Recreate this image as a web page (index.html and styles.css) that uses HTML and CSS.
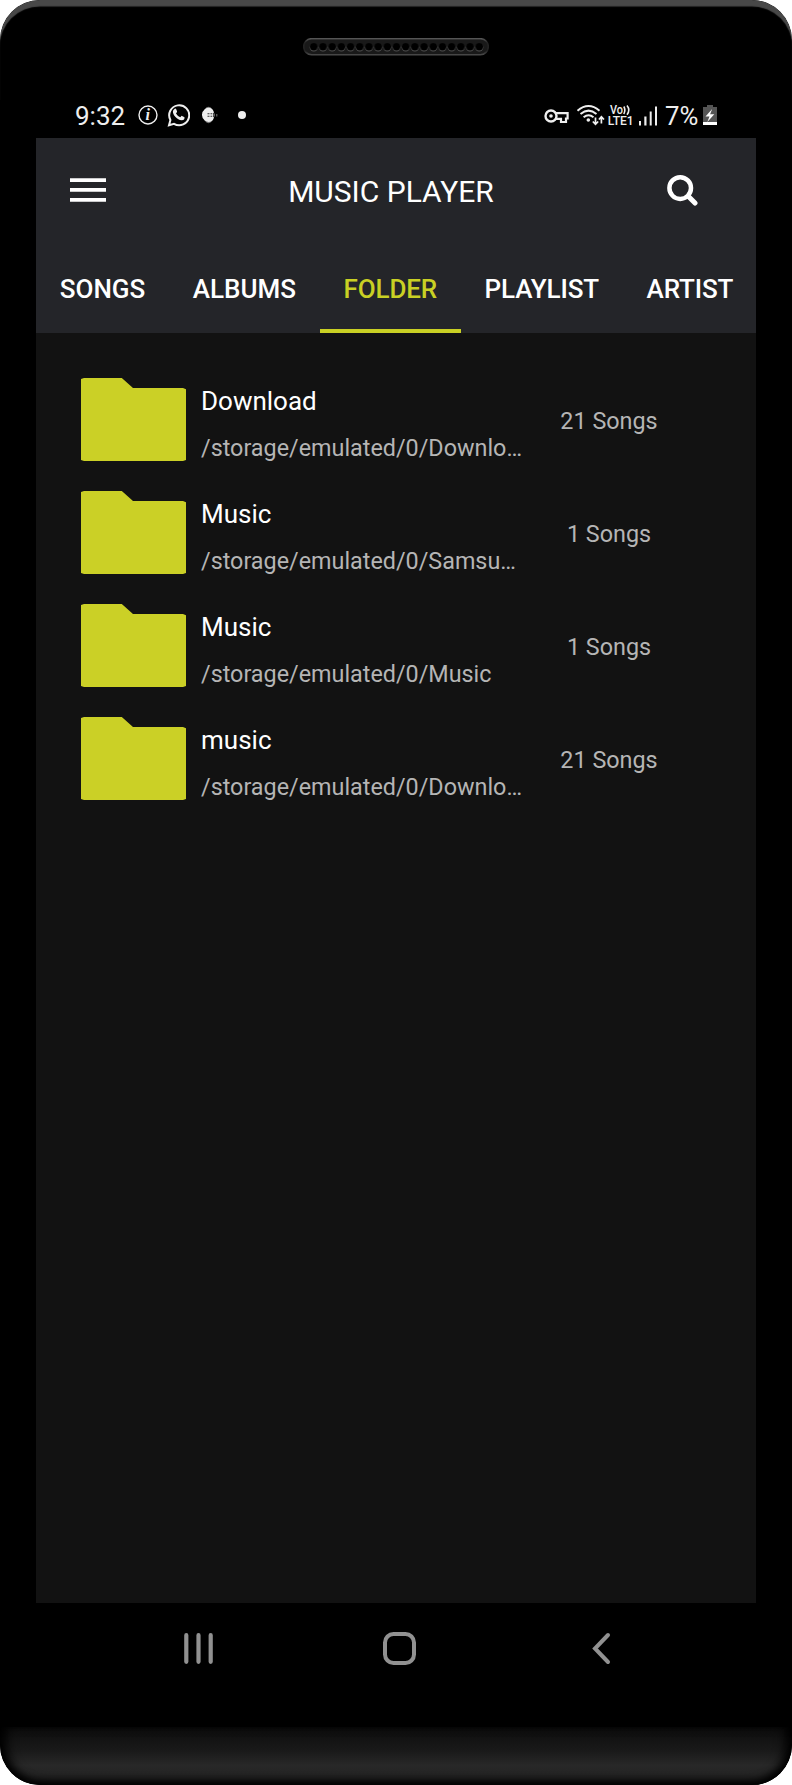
FILE: index.html
```html
<!DOCTYPE html>
<html lang="en">
<head>
<meta charset="utf-8">
<title>Music Player</title>
<link rel="stylesheet" href="styles.css">
</head>
<body>
<div class="phone">
  <div class="bezel-top">
    <svg class="speaker" width="186" height="18" viewBox="0 0 186 18">
      <defs>
        <linearGradient id="rim" x1="0" y1="0" x2="0" y2="1"><stop offset="0" stop-color="#555"/><stop offset=".25" stop-color="#222"/><stop offset=".75" stop-color="#222"/><stop offset="1" stop-color="#484848"/></linearGradient>
        <pattern id="holes" x="6.2" y="0" width="9.19" height="18" patternUnits="userSpaceOnUse"><circle cx="4.6" cy="9.5" r="4" fill="#505050"/><circle cx="4.6" cy="8.7" r="3.7" fill="#000"/></pattern>
      </defs>
      <rect x=".7" y=".7" width="184.6" height="16" rx="8" fill="#191919" stroke="url(#rim)" stroke-width="1.6"/>
      <rect x="6.2" y="0" width="174.6" height="18" fill="url(#holes)"/>
    </svg>
  </div>

  <div class="status">
    <div class="status-left">
      <span class="clock">9:32</span>
      <svg class="ic-info" width="20" height="20" viewBox="0 0 20 20"><circle cx="10" cy="10" r="9" fill="none" stroke="#eee" stroke-width="1.4"/><text x="9.8" y="15" text-anchor="middle" class="info-letter">i</text></svg>
      <svg class="ic-chat" width="23" height="24" viewBox="0 0 23 24"><path d="M2 22.2 3.4 17A10 10 0 1 1 7 20.8Z" fill="none" stroke="#eee" stroke-width="2"/><path d="M7.2 6.2Q8.6 5.1 9.1 6.1L10.1 8.5Q10.2 9.1 9 10.4Q10.6 13.1 13.3 14.3L14.6 12.8L17.5 14.2Q17.8 17 14.8 17.3C10.3 17.4 5.7 12 5.9 8.6Q6 7 7.2 6.2Z" fill="#eee"/></svg>
      <svg class="ic-app" width="17" height="18" viewBox="0 0 17 18"><ellipse cx="7.5" cy="9" rx="5.2" ry="8.3" fill="#777"/><path d="M10 2.2A7 7 0 1 0 10 15.6Q12.4 14.5 13 11.5L12 10.8V7.2L13 6.5Q12.4 3.5 10 2.2Z" fill="#eee"/><path d="M6.5 7.8h2M6.5 10.2h2M9.5 7.8h1.8M9.5 10.2h1.8" stroke="#333" stroke-width="1.1"/><path d="M13.3 7.5v3M15.8 8v2.5" fill="none" stroke="#777"/></svg>
      <span class="dot"></span>
    </div>
    <svg class="status-right" width="174" height="36" viewBox="0 -6 174 36">
      <g fill="none" stroke="#eee">
        <circle cx="7" cy="11" r="5.5" stroke-width="2.4"/><circle cx="7" cy="11" r="1.8" fill="#eee" stroke="none"/>
        <path d="M12 8.2H23.6V13.5H22V17H17V13.8H12" stroke-width="2.2"/>
        <path d="M33.5 5.7Q44.5-3.6 55.5 5.7" stroke-width="2"/><path d="M36.5 9Q44.5 2.3 52.5 9" stroke-width="2"/><path d="M39.6 12.2Q44.5 8.3 49.5 12.2" stroke-width="2"/>
        <path d="M51.5 12.5V19M48.8 16.5L51.5 19.3L54.2 16.5M57.4 18.5V12.2M54.9 14.5L57.4 11.8L60 14.5" stroke-width="1.7"/>
        <path d="M79.8 1.5Q81.9 5 79.8 9M83 .5Q86.6 5 83 9.8" stroke-width="1.6"/>
      </g>
      <circle cx="44.3" cy="15" r="1.8" fill="#eee"/>
      <text class="net" x="66" y="8.9" textLength="13" lengthAdjust="spacingAndGlyphs">Vo</text>
      <text class="net" x="63.7" y="20.1" textLength="26" lengthAdjust="spacingAndGlyphs">LTE1</text>
      <path d="M95 16h2v4.5h-2zM100.3 11.5h2.2v9h-2.2zM105.7 6.5h2v14h-2zM111 1.5h2v19h-2z" fill="#eee"/>
      <text class="pct" x="121" y="20.2" textLength="33.3" lengthAdjust="spacingAndGlyphs">7%</text>
      <path d="M163 0h6v2h4v18h-14v-18h4z" fill="#555"/><path d="M159 17h14v3h-14z" fill="#fff"/><path d="M168.2 4 161.5 11.5h4l-2.2 5.5 7-7.8h-4.2z" fill="#fff"/>
    </svg>
  </div>

  <main class="screen">
    <header class="header">
      <div class="titlebar">
        <svg class="menu" width="36" height="24" viewBox="0 0 36 24"><path d="M0 2.1H36M0 11.9H36M0 21.8H36" stroke="#fff" stroke-width="3.8"/></svg>
        <h1 class="title">MUSIC PLAYER</h1>
        <svg class="search" width="31" height="31" viewBox="0 0 31 31"><circle cx="13.2" cy="13.1" r="10.8" fill="none" stroke="#fff" stroke-width="4.5"/><path d="M21.5 21.5 28 28" stroke="#fff" stroke-width="5" stroke-linecap="round"/></svg>
      </div>
      <nav class="tabs">
        <span class="tab">SONGS</span>
        <span class="tab">ALBUMS</span>
        <span class="tab active">FOLDER</span>
        <span class="tab tight">PLAYLIST</span>
        <span class="tab tight">ARTIST</span>
      </nav>
    </header>
    <div class="list">
      <div class="row">
        <svg class="folder" width="105" height="83" viewBox="0 0 105 83"><path d="M3 0H40.8L52 10H102L105 11.2V82L102 83H3L0 82V1Z"/></svg>
        <div class="info"><div class="name">Download</div><div class="path">/storage/emulated/0/Downlo…</div></div>
        <div class="count">21 Songs</div>
      </div>
      <div class="row">
        <svg class="folder" width="105" height="83" viewBox="0 0 105 83"><path d="M3 0H40.8L52 10H102L105 11.2V82L102 83H3L0 82V1Z"/></svg>
        <div class="info"><div class="name">Music</div><div class="path">/storage/emulated/0/Samsu…</div></div>
        <div class="count">1 Songs</div>
      </div>
      <div class="row">
        <svg class="folder" width="105" height="83" viewBox="0 0 105 83"><path d="M3 0H40.8L52 10H102L105 11.2V82L102 83H3L0 82V1Z"/></svg>
        <div class="info"><div class="name">Music</div><div class="path">/storage/emulated/0/Music</div></div>
        <div class="count">1 Songs</div>
      </div>
      <div class="row">
        <svg class="folder" width="105" height="83" viewBox="0 0 105 83"><path d="M3 0H40.8L52 10H102L105 11.2V82L102 83H3L0 82V1Z"/></svg>
        <div class="info"><div class="name">music</div><div class="path">/storage/emulated/0/Downlo…</div></div>
        <div class="count">21 Songs</div>
      </div>
    </div>
  </main>

  <div class="navbar">
    <svg width="30" height="34" viewBox="0 0 30 34"><path d="M2.3 3.2V29.8M14.5 3.2V29.8M26.7 3.2V29.8" stroke="#919191" stroke-width="4.2" stroke-linecap="round"/></svg>
    <svg class="home" width="33" height="34" viewBox="0 0 33 34"><rect x="2" y="2" width="29" height="29" rx="8.5" fill="none" stroke="#919191" stroke-width="4"/></svg>
    <svg width="19" height="34" viewBox="0 0 19 34"><path d="M16 3 3 16.5 16 30" fill="none" stroke="#919191" stroke-width="4" stroke-linecap="round"/></svg>
  </div>
  <div class="chin"></div>
</div>
</body>
</html>
```
FILE: styles.css
```css
body {
  margin: 0;
  background: #fff;
  font-family: Roboto, "Liberation Sans", sans-serif;
}
.phone {
  width: 792px;
  height: 1785px;
  display: flex;
  flex-direction: column;
  background: #000;
  border-radius: 40px;
  overflow: hidden;
}
.bezel-top {
  height: 100px;
  flex: none;
  box-sizing: border-box;
  display: flex;
  justify-content: center;
  padding: 38px 1px 0 0;
  border-radius: 40px 40px 0 0;
  box-shadow: inset 0 7px 1px -0.5px #484848;
}
.speaker { display: block; }
.status {
  height: 38px;
  flex: none;
  display: flex;
  justify-content: space-between;
  padding: 0 75px;
}
.status-left { display: flex; }
.clock {
  width: 62px;
  font-size: 26px;
  line-height: 32px;
  color: #eee;
}
.ic-info { margin: 5px 0 0 1px; }
.info-letter {
  font: italic bold 16px "Liberation Serif", serif;
  fill: #eee;
}
.ic-chat { margin: 3px 0 0 9px; }
.ic-app { margin: 6px 0 0 11px; }
.dot {
  width: 8px;
  height: 8px;
  margin: 11px 0 0 20px;
  border-radius: 50%;
  background: #eee;
}
.status-right {
  margin: -1px -1px 0 0;
  overflow: visible;
  fill: #eee;
}
.net { font-size: 12.2px; font-weight: 500; }
.pct { font-size: 26px; }
.screen {
  height: 1465px;
  flex: none;
  margin: 0 36px;
  background: #121212;
}
.header {
  height: 195px;
  background: #242529;
}
.titlebar {
  height: 105px;
  display: grid;
  grid-template-columns: 100px 1fr 110px;
}
.menu { margin: 40px 0 0 34px; }
.title {
  margin: 0;
  padding-top: 36px;
  font-size: 30px;
  line-height: 36px;
  font-weight: 400;
  text-align: center;
  color: #fff;
}
.search { margin: 37px 0 0 21px; }
.tabs {
  height: 90px;
  display: flex;
}
.tab {
  box-sizing: border-box;
  flex: none;
  padding: 30px 23.75px 0;
  font-size: 26px;
  line-height: 32px;
  font-weight: 500;
  color: #fff;
}
.tab.tight { letter-spacing: -0.13px; }
.tab.active {
  letter-spacing: -0.13px;
  color: #c9d024;
  border-bottom: 4px solid #c9d024;
}
.list {
  display: flex;
  flex-direction: column;
  gap: 30px;
  padding: 45px 45px 0;
}
.row {
  height: 83px;
  display: flex;
}
.folder { flex: none; fill: #cbd026; }
.info {
  width: 330px;
  margin-left: 15px;
  white-space: nowrap;
}
.name {
  padding-top: 7px;
  font-size: 26px;
  line-height: 32px;
  color: #fff;
}
.path {
  margin-top: 17px;
  font-size: 23.35px;
  line-height: 28px;
  color: #b5b5b5;
}
.count {
  width: 156px;
  font-size: 23.35px;
  line-height: 28px;
  padding-top: 29px;
  text-align: center;
  color: #b5b5b5;
}
.navbar {
  height: 124px;
  flex: none;
  display: flex;
  justify-content: space-between;
  align-items: flex-start;
  box-sizing: border-box;
  padding: 29px 181px 0 184px;
}
.home { margin-right: 7px; }
.chin {
  height: 58px;
  flex: none;
  border-radius: 0 0 40px 40px;
  background: linear-gradient(#0d0d0d, #191919 40%, #282828 66%, #202020);
  box-shadow: inset 0 -6px 8px -2px #000, inset 10px 0 12px -4px #000, inset -10px 0 12px -4px #000;
}
```
